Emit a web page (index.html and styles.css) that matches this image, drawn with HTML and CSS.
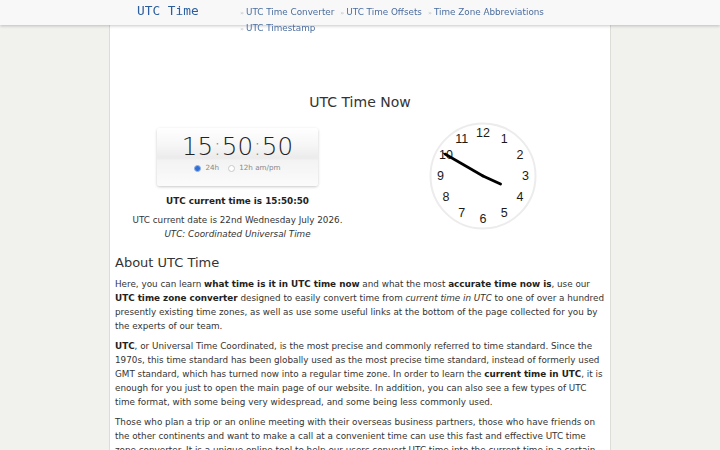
FILE: index.html
```html
<!DOCTYPE html>
<html lang="en">
<head>
<meta charset="utf-8">
<title>UTC Time Now</title>
<link rel="stylesheet" href="styles.css">
</head>
<body>
<header class="topbar">
  <div class="topbar-inner">
    <a class="logo" href="#">UTC Time</a>
    <nav class="menu">
      <a class="menu-item" href="#">UTC Time Converter</a>
      <a class="menu-item" href="#">UTC Time Offsets</a>
      <a class="menu-item" href="#">Time Zone Abbreviations</a>
      <a class="menu-item" href="#">UTC Timestamp</a>
    </nav>
  </div>
</header>

<main class="page">
  <h1 class="page-title">UTC Time Now</h1>

  <section class="now">
    <div class="now-col">
      <div class="digital">
        <div class="digits">15<span class="colon">:</span>50<span class="colon">:</span>50</div>
        <div class="formats">
          <span class="radio radio-on"></span><span class="radio-label">24h</span>
          <span class="radio"></span><span class="radio-label">12h am/pm</span>
        </div>
      </div>
      <p class="now-time"><b>UTC current time is 15:50:50</b></p>
      <p class="now-date">UTC current date is 22nd Wednesday July 2026.<br><i>UTC: Coordinated Universal Time</i></p>
    </div>
    <div class="now-col">
      <svg class="analog" width="108" height="108" viewBox="0 0 108 108">
        <circle cx="54" cy="54" r="52.5" fill="#fff" stroke="#ececec" stroke-width="2"/>
        <g class="dial" text-anchor="middle" dominant-baseline="central">
          <text x="54" y="11">12</text>
          <text x="75.3" y="17.2">1</text>
          <text x="91" y="33">2</text>
          <text x="96.5" y="54">3</text>
          <text x="91" y="75.3">4</text>
          <text x="75.3" y="91">5</text>
          <text x="54" y="97">6</text>
          <text x="32.7" y="91">7</text>
          <text x="17" y="75.3">8</text>
          <text x="11.5" y="54">9</text>
          <text x="17" y="33">10</text>
          <text x="32.7" y="17.2">11</text>
        </g>
        <line x1="54" y1="54" x2="71.5" y2="62" stroke="#000" stroke-width="3" stroke-linecap="round"/>
        <line x1="54" y1="54" x2="16" y2="32" stroke="#000" stroke-width="2.6" stroke-linecap="round"/>
        <line x1="54" y1="54" x2="14" y2="31" stroke="#000" stroke-width="1" stroke-linecap="round"/>
      </svg>
    </div>
  </section>

  <h2 class="about-title">About UTC Time</h2>
  <p class="text">Here, you can learn <b>what time is it in UTC time now</b> and what the most <b>accurate time now is</b>, use our <b>UTC time zone converter</b> designed to easily convert time from <i>current time in UTC</i> to one of over a hundred presently existing time zones, as well as use some useful links at the bottom of the page collected for you by the experts of our team.</p>
  <p class="text"><b>UTC</b>, or Universal Time Coordinated, is the most precise and commonly referred to time standard. Since the 1970s, this time standard has been globally used as the most precise time standard, instead of formerly used GMT standard, which has turned now into a regular time zone. In order to learn the <b>current time in UTC</b>, it is enough for you just to open the main page of our website. In addition, you can also see a few types of UTC time format, with some being very widespread, and some being less commonly used.</p>
  <p class="text">Those who plan a trip or an online meeting with their overseas business partners, those who have friends on the other continents and want to make a call at a convenient time can use this fast and effective UTC time zone converter. It is a unique online tool to help our users convert UTC time into the current time in a certain time zone of the world in just a few seconds.</p>
</main>
</body>
</html>
```

FILE: styles.css
```css
html, body {
  margin: 0;
  padding: 0;
}

body {
  background: #f1f1ed;
  font-family: "DejaVu Sans", Verdana, sans-serif;
  font-size: 8.8px;
  line-height: 14px;
  color: #333;
}

a {
  text-decoration: none;
}

/* fixed top bar */
.topbar {
  position: fixed;
  top: 0;
  left: 0;
  right: 0;
  height: 25px;
  background: #f8f8f8;
  box-shadow: 0 1px 3px rgba(0, 0, 0, 0.22);
  z-index: 10;
}

.topbar-inner {
  width: 500px;
  margin: 0 auto;
  display: flex;
}

.logo {
  width: 103px;
  padding: 3px 0 0 27px;
  font-family: "DejaVu Sans Mono", monospace;
  font-size: 12.8px;
  line-height: 16px;
  color: #2c5e9e;
}

.menu {
  width: 370px;
  padding-top: 5px;
  display: flex;
  flex-wrap: wrap;
  line-height: 15px;
}

.menu-item {
  color: #4b6d9f;
  margin-right: 6px;
  white-space: nowrap;
}

.menu-item::before {
  content: "»";
  color: #c4c4c4;
  font-size: 6.5px;
  margin-right: 2px;
}

/* content column */
.page {
  width: 490px;
  margin: 0 auto;
  padding: 94px 5px 40px;
  background: #fff;
  border-left: 1px solid #dddcd6;
  border-right: 1px solid #dddcd6;
}

.page-title {
  margin: 0;
  text-align: center;
  font-size: 14px;
  line-height: 16px;
  font-weight: normal;
  color: #333;
}

.now {
  display: grid;
  grid-template-columns: 1fr 1fr;
  margin-top: 12px;
}

.now-col {
  display: flex;
  flex-direction: column;
  align-items: center;
  text-align: center;
}

.digital {
  width: 161px;
  height: 58px;
  margin-top: 6px;
  border-radius: 3px;
  background: linear-gradient(#ffffff 0%, #f6f6f6 30%, #ebebeb 52%, #f3f3f3 56%, #fbfbfb 100%);
  box-shadow: 0 1px 3px rgba(0, 0, 0, 0.22);
  display: flex;
  flex-direction: column;
  align-items: center;
}

.digits {
  margin-top: 4px;
  font-family: "DejaVu Sans", sans-serif;
  font-weight: 200;
  font-size: 24.5px;
  line-height: 30px;
  letter-spacing: 0.2px;
  color: #222;
}

.colon {
  color: #8a8a8a;
}

.formats {
  margin-top: 1px;
  display: flex;
  align-items: center;
  font-size: 7.2px;
  line-height: 10px;
  color: #888;
}

.radio {
  width: 5px;
  height: 5px;
  border-radius: 50%;
  border: 1px solid #c9c9c9;
  background: #fff;
  margin-right: 4px;
}

.radio-on {
  background: #2f6fd8;
  border-color: #8db0ea;
}

.radio-label {
  margin-right: 9px;
}

.radio-label:last-child {
  margin-right: 0;
}

.now-time {
  margin: 8px 0 0;
  color: #222;
}

.now-date {
  margin: 5px 0 0;
}

.analog {
  display: block;
}

.dial {
  font-family: "Liberation Sans", Arial, sans-serif;
  font-size: 12.5px;
  fill: #1a1a1a;
}

.about-title {
  margin: 14px 0 0;
  font-size: 13px;
  line-height: 16px;
  font-weight: normal;
  color: #333;
}

.text {
  margin: 6px 0 0;
}

.text b {
  color: #222;
}
```
